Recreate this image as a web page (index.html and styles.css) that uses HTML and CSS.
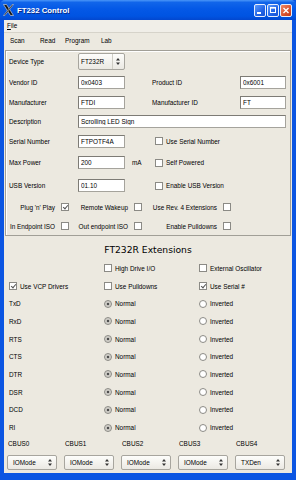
FILE: index.html
```html
<!DOCTYPE html>
<html lang="en">

<head>
    <meta charset="UTF-8">
    <meta name="viewport" content="width=device-width, initial-scale=1.0">
    <title>FT232 Control</title>
    <link rel="stylesheet" href="styles.css">
</head>

<body>
    <div class="window">
        <!-- Заголовок окна -->
        <div class="titlebar">
            <svg class="app-icon" width="11" height="12" viewBox="0 0 11 12">
                <path d="M0.5 0.5h3l7 11h-3z" fill="#151515" stroke="#e8e8e8" stroke-width="0.6"/>
                <path d="M10.5 0.5h-1.4l-8.6 11h1.4z" fill="#151515" stroke="#e8e8e8" stroke-width="0.5"/>
            </svg>
            <span class="title">FT232 Control</span>
            <div class="title-buttons">
                <span class="tbtn">
                    <svg width="10" height="11" viewBox="0 0 10 11"><rect x="2" y="7" width="4" height="2" fill="#fff"/></svg>
                </span>
                <span class="tbtn">
                    <svg width="10" height="11" viewBox="0 0 10 11"><rect x="2.5" y="2.5" width="5" height="5" fill="none" stroke="#fff"/><rect x="2" y="2" width="6" height="1.6" fill="#fff"/></svg>
                </span>
                <span class="tbtn close">
                    <svg width="10" height="11" viewBox="0 0 10 11"><path d="M2.5 3l5 5M7.5 3l-5 5" stroke="#fff" stroke-width="1.4"/></svg>
                </span>
            </div>
        </div>

        <div class="frame">
            <div class="client">
                <div class="menubar"><span><u>F</u>ile</span></div>
                <div class="toolbar">
                    <span>Scan</span>
                    <span>Read</span>
                    <span>Program</span>
                    <span>Lab</span>
                </div>

                <!-- Параметры устройства -->
                <div class="group">
                    <div class="frow r-lg">
                        <span>Device Type</span>
                        <div class="combo device">
                            <span>FT232R</span>
                            <span class="arrows sep">
                                <svg width="4" height="7" viewBox="0 0 4 7"><path d="M2 0L4 2.6H0zM2 7L4 4.4H0z" fill="#333"/></svg>
                            </span>
                        </div>
                    </div>
                    <div class="frow r-lg">
                        <span>Vendor ID</span>
                        <input class="edit" type="text" value="0x0403" readonly>
                        <span></span>
                        <span>Product ID</span>
                        <input class="edit" type="text" value="0x6001" readonly>
                    </div>
                    <div class="frow">
                        <span>Manufacturer</span>
                        <input class="edit" type="text" value="FTDI" readonly>
                        <span></span>
                        <span>Manufacturer ID</span>
                        <input class="edit" type="text" value="FT" readonly>
                    </div>
                    <div class="frow">
                        <span>Description</span>
                        <input class="edit wide" type="text" value="Scrolling LED Sign" readonly>
                    </div>
                    <div class="frow r-md">
                        <span>Serial Number</span>
                        <input class="edit" type="text" value="FTPOTF4A" readonly>
                        <span></span>
                        <label class="check side"><span class="cb"></span>Use Serial Number</label>
                    </div>
                    <div class="frow r-xl">
                        <span>Max Power</span>
                        <input class="edit" type="text" value="200" readonly>
                        <span class="unit">mA</span>
                        <label class="check side"><span class="cb"></span>Self Powered</label>
                    </div>
                    <div class="frow r-xl">
                        <span>USB Version</span>
                        <input class="edit" type="text" value="01.10" readonly>
                        <span></span>
                        <label class="check side"><span class="cb"></span>Enable USB Version</label>
                    </div>

                    <div class="flags">
                        <span class="flag">Plug 'n' Play</span><span class="cb on"></span>
                        <span class="flag">Remote Wakeup</span><span class="cb"></span>
                        <span class="flag">Use Rev. 4 Extensions</span><span class="cb"></span>
                        <span class="flag">In Endpoint ISO</span><span class="cb"></span>
                        <span class="flag">Out endpoint ISO</span><span class="cb"></span>
                        <span class="flag">Enable Pulldowns</span><span class="cb"></span>
                    </div>
                </div>

                <!-- Расширения FT232R -->
                <div class="ext">
                    <h2>FT232R Extensions</h2>
                    <div class="ext-grid">
                        <span></span>
                        <label class="check"><span class="cb"></span>High Drive I/O</label>
                        <label class="check"><span class="cb"></span>External Oscillator</label>

                        <label class="check"><span class="cb on"></span>Use VCP Drivers</label>
                        <label class="check"><span class="cb"></span>Use Pulldowns</label>
                        <label class="check"><span class="cb on"></span>Use Serial #</label>

                        <span>TxD</span>
                        <label class="check"><span class="rb on"></span>Normal</label>
                        <label class="check"><span class="rb"></span>Inverted</label>

                        <span>RxD</span>
                        <label class="check"><span class="rb on"></span>Normal</label>
                        <label class="check"><span class="rb"></span>Inverted</label>

                        <span>RTS</span>
                        <label class="check"><span class="rb on"></span>Normal</label>
                        <label class="check"><span class="rb"></span>Inverted</label>

                        <span>CTS</span>
                        <label class="check"><span class="rb on"></span>Normal</label>
                        <label class="check"><span class="rb"></span>Inverted</label>

                        <span>DTR</span>
                        <label class="check"><span class="rb on"></span>Normal</label>
                        <label class="check"><span class="rb"></span>Inverted</label>

                        <span>DSR</span>
                        <label class="check"><span class="rb on"></span>Normal</label>
                        <label class="check"><span class="rb"></span>Inverted</label>

                        <span>DCD</span>
                        <label class="check"><span class="rb on"></span>Normal</label>
                        <label class="check"><span class="rb"></span>Inverted</label>

                        <span>RI</span>
                        <label class="check"><span class="rb on"></span>Normal</label>
                        <label class="check"><span class="rb"></span>Inverted</label>
                    </div>

                    <div class="cbus">
                        <span class="cbus-label">CBUS0</span>
                        <span class="cbus-label">CBUS1</span>
                        <span class="cbus-label">CBUS2</span>
                        <span class="cbus-label">CBUS3</span>
                        <span class="cbus-label">CBUS4</span>
                        <div class="combo small"><span>IOMode</span><span class="arrows"><svg width="4" height="7" viewBox="0 0 4 7"><path d="M2 0L4 2.6H0zM2 7L4 4.4H0z" fill="#333"/></svg></span></div>
                        <div class="combo small"><span>IOMode</span><span class="arrows"><svg width="4" height="7" viewBox="0 0 4 7"><path d="M2 0L4 2.6H0zM2 7L4 4.4H0z" fill="#333"/></svg></span></div>
                        <div class="combo small"><span>IOMode</span><span class="arrows"><svg width="4" height="7" viewBox="0 0 4 7"><path d="M2 0L4 2.6H0zM2 7L4 4.4H0z" fill="#333"/></svg></span></div>
                        <div class="combo small"><span>IOMode</span><span class="arrows"><svg width="4" height="7" viewBox="0 0 4 7"><path d="M2 0L4 2.6H0zM2 7L4 4.4H0z" fill="#333"/></svg></span></div>
                        <div class="combo small"><span>TXDen</span><span class="arrows"><svg width="4" height="7" viewBox="0 0 4 7"><path d="M2 0L4 2.6H0zM2 7L4 4.4H0z" fill="#333"/></svg></span></div>
                    </div>
                </div>
            </div>
        </div>
    </div>
</body>

</html>
```

FILE: styles.css
```css
body {
    margin: 0;
    padding: 0;
    font-family: "Liberation Sans", Arial, sans-serif;
    font-size: 6.4px;
    color: #000;
}

.window {
    width: 296px;
    height: 480px;
    display: flex;
    flex-direction: column;
    background-color: #0b55e2;
}

/* заголовок */
.titlebar {
    height: 20px;
    flex: none;
    display: flex;
    align-items: center;
    padding-left: 3px;
    background: linear-gradient(to bottom, #4a96f8 0%, #1165ea 12%, #0458e6 45%, #0054e2 80%, #0247cf 100%);
    border-radius: 5px 5px 0 0;
}

.app-icon {
    margin-right: 3px;
}

.title {
    color: white;
    font-weight: bold;
    font-size: 7.8px;
    text-shadow: 1px 1px 0 #0a2d8a;
}

.title-buttons {
    margin-left: auto;
    margin-right: 4px;
    display: flex;
    gap: 1px;
}

.tbtn {
    width: 12px;
    height: 13px;
    box-sizing: border-box;
    border: 1px solid #e8eefc;
    border-radius: 2px;
    background: linear-gradient(135deg, #5d9bfb, #2163e6 60%, #1a55d4);
    display: flex;
    align-items: center;
    justify-content: center;
}

.tbtn.close {
    background: linear-gradient(135deg, #ee8a68, #d9512c 60%, #c03b19);
}

.frame {
    flex: 1;
    display: flex;
    padding: 0 5px 7px 4px;
}

.client {
    flex: 1;
    background-color: #ece9e0;
    display: flex;
    flex-direction: column;
}

/* меню и панель */
.menubar {
    height: 12px;
    line-height: 12px;
    padding-left: 3px;
    background-color: #f0eee8;
    border-bottom: 1px solid #d6d3ca;
}

.toolbar {
    height: 16px;
    line-height: 16px;
    display: grid;
    grid-template-columns: 30px 25px 36px auto;
    padding-left: 6px;
}

/* группа параметров */
.group {
    margin: 1px 1px 0 1px;
    padding: 0 3px;
    border: 1px solid #a19f97;
    box-shadow: inset 1px 1px 0 #fff;
}

.frow {
    height: 19px;
    display: grid;
    grid-template-columns: 69px 48px 26px 88px 1fr;
    align-items: center;
}

.frow.r-lg {
    height: 21px;
}

.frow.r-md {
    height: 20px;
}

.frow.r-xl {
    height: 23px;
}

.edit {
    width: 47px;
    height: 13px;
    box-sizing: border-box;
    margin: 0;
    padding: 0 2px;
    border: 1px solid #a5a39c;
    border-top-color: #7d7b75;
    border-left-color: #7d7b75;
    background-color: white;
    font-family: inherit;
    font-size: 6.4px;
    color: #000;
    outline: none;
}

.frow .edit:last-child {
    width: 46px;
}

.frow .edit.wide {
    grid-column: 2 / 6;
    width: 208px;
}

.unit {
    padding-left: 6px;
}

.check {
    display: flex;
    align-items: center;
    gap: 3px;
}

.check.side {
    grid-column: 4 / 6;
    padding-left: 3px;
}

.cb {
    width: 8px;
    height: 8px;
    box-sizing: border-box;
    border: 1px solid #8b8a85;
    background-color: white;
    flex: none;
    position: relative;
}

.cb.on::after {
    content: "";
    position: absolute;
    left: 2px;
    top: 0;
    width: 2px;
    height: 4px;
    border: solid #555;
    border-width: 0 1px 1px 0;
    transform: rotate(40deg);
}

.rb {
    width: 8px;
    height: 8px;
    box-sizing: border-box;
    border: 1px solid #8b8a85;
    border-radius: 50%;
    background-color: white;
    flex: none;
}

.rb.on {
    background: radial-gradient(circle, #4d4d4d 0, #4d4d4d 1.3px, #c9c7c1 1.6px, #e2e0da 100%);
}

.flags {
    display: grid;
    grid-template-columns: 47px 8px 55px 8px 71px 8px;
    grid-template-rows: 20px 18px;
    column-gap: 5px;
    align-items: center;
}

.flag {
    text-align: right;
    padding-right: 1px;
}

/* комбобоксы */
.combo {
    box-sizing: border-box;
    display: flex;
    align-items: center;
    justify-content: space-between;
    border: 1px solid #a7a59e;
    border-radius: 2px;
    background: linear-gradient(to bottom, #fdfdfb, #ebe9e3);
}

.combo.device {
    width: 47px;
    height: 17px;
    padding-left: 2px;
}

.combo.small {
    width: 50px;
    height: 15px;
    padding: 0 4px 0 5px;
}

.arrows {
    display: flex;
    align-items: center;
}

.arrows.sep {
    height: 100%;
    border-left: 1px solid #cfcdc5;
    padding: 0 4px 0 3px;
}

/* расширения */
.ext {
    padding-left: 5px;
}

h2 {
    margin: 5px 0 0 0;
    height: 18.5px;
    line-height: 18.5px;
    font-family: "DejaVu Sans", sans-serif;
    font-weight: normal;
    font-size: 9.2px;
    text-align: center;
    color: #000;
    padding-right: 5px;
}

.ext-grid {
    display: grid;
    grid-template-columns: 95px 95px 1fr;
    grid-auto-rows: 17.7px;
    align-items: center;
}

.cbus {
    margin-left: -2px;
    display: grid;
    grid-template-columns: repeat(5, 57px);
    grid-template-rows: 13.5px 15px;
    row-gap: 5px;
    align-items: center;
}

.cbus-label {
    padding-left: 1px;
}
```
